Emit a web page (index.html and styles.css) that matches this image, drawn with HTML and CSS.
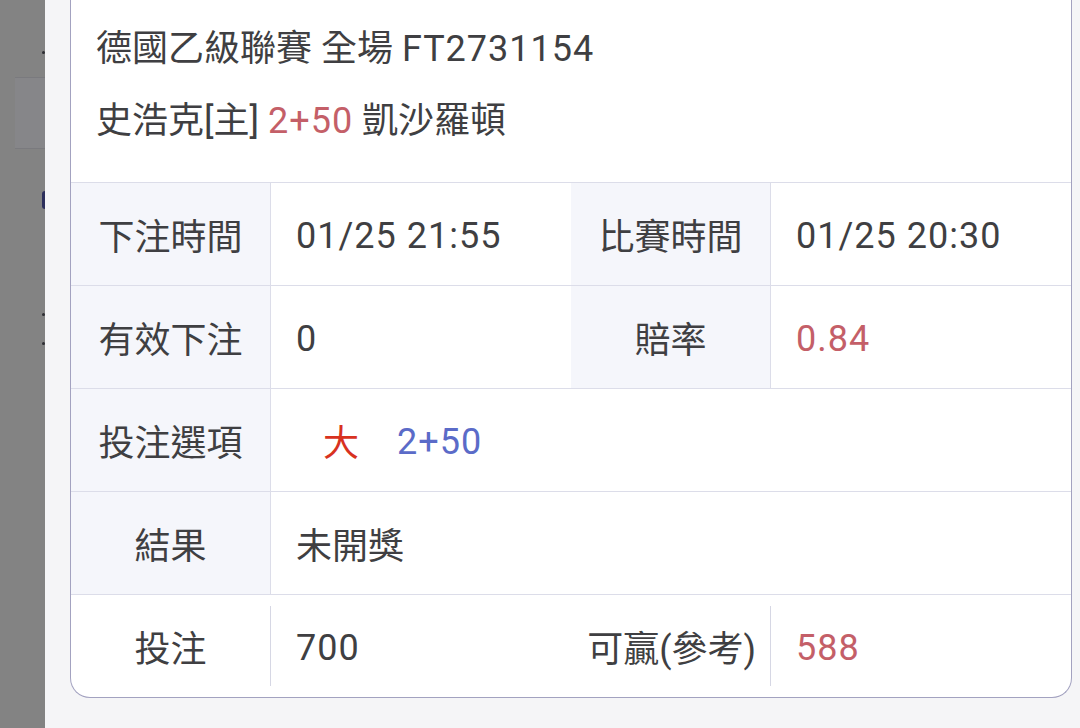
FILE: index.html
```html
<!DOCTYPE html>
<html lang="zh-Hant">
<head>
<meta charset="utf-8">
<title>注單詳情</title>
<link rel="stylesheet" href="styles.css">
</head>
<body>
<div class="page">
  <div class="backdrop">
    <div class="bd-dot bd-dot-top"></div>
    <div class="bd-block"></div>
    <div class="bd-half"></div>
    <div class="bd-dot bd-dot-a"></div>
    <div class="bd-dot bd-dot-b"></div>
  </div>
  <div class="sheet">
    <div class="card">
      <div class="head">
        <div class="head-line">德國乙級聯賽 全場 <span class="num">FT2731154</span></div>
        <div class="head-line">史浩克[主] <span class="num red">2+50</span> 凱沙羅頓</div>
      </div>
      <div class="row">
        <div class="lbl">下注時間</div>
        <div class="val num">01/25 21:55</div>
        <div class="lbl">比賽時間</div>
        <div class="val num">01/25 20:30</div>
      </div>
      <div class="row">
        <div class="lbl">有效下注</div>
        <div class="val num">0</div>
        <div class="lbl">賠率</div>
        <div class="val num red">0.84</div>
      </div>
      <div class="row">
        <div class="lbl">投注選項</div>
        <div class="val span3"><span class="pick">大</span><span class="line num">2+50</span></div>
      </div>
      <div class="row">
        <div class="lbl">結果</div>
        <div class="val span3">未開獎</div>
      </div>
      <div class="row row-last">
        <div class="cell cell-lbl">投注</div>
        <div class="cell cell-val num">700</div>
        <div class="cell cell-right">可贏(參考)</div>
        <div class="cell cell-val num red">588</div>
      </div>
    </div>
  </div>
</div>
</body>
</html>
```

FILE: styles.css
```css
* { box-sizing: border-box; }
html, body { margin: 0; padding: 0; }
body {
  background: #f5f5f7;
  font-family: Roboto, "Noto Sans CJK TC", sans-serif;
  color: #3f3f42;
  width: 1080px;
  height: 728px;
  overflow: hidden;
}
.page {
  display: flex;
  height: 728px;
}
.backdrop {
  width: 45px;
  flex: none;
  background: #838383;
  display: flex;
  flex-direction: column;
  align-items: flex-end;
}
.bd-dot {
  width: 3px;
  height: 3px;
  border-radius: 50%;
  background: #2e2e33;
}
.bd-dot-top { margin-top: 51px; }
.bd-block {
  margin-top: 23px;
  width: 30px;
  height: 72px;
  background: #868689;
  border-top: 1px solid #7a7a7e;
  border-bottom: 1px solid #7a7a7e;
}
.bd-half {
  margin-top: 42px;
  width: 3px;
  height: 18px;
  border-radius: 3px 0 0 3px;
  background: #2c2f5c;
}
.bd-dot-a { margin-top: 104px; }
.bd-dot-b { margin-top: 26px; }

.sheet {
  flex: 1;
  padding-left: 25px;
}
.card {
  width: 1002px;
  background: #fff;
  border: 1px solid #a3a2c0;
  border-top: none;
  border-radius: 0 0 20px 20px;
  overflow: hidden;
}
.head {
  padding: 13px 25px 25px;
}
.head-line {
  font-size: 36px;
  line-height: 72px;
  white-space: nowrap;
}
.num {
  letter-spacing: 1px;
}
.val.num, .cell-val.num {
  padding-top: 3px;
}
.red { color: #c45f68; }

.row {
  display: grid;
  grid-template-columns: 200px 300px 200px 300px;
  height: 103px;
  border-top: 1px solid #dcdde9;
  font-size: 36px;
}
.lbl {
  background: #f5f6fb;
  border-right: 1px solid #dcdde9;
  display: flex;
  align-items: center;
  justify-content: center;
}
.val {
  display: flex;
  align-items: center;
  padding-left: 25px;
}
.span3 { grid-column: 2 / -1; }
.pick {
  color: #d8321f;
  margin-left: 27px;
}
.line {
  color: #5b6bc8;
  margin-left: 38px;
  padding-top: 3px;
}
.row-last {
  padding: 11px 0;
}
.cell {
  display: flex;
  align-items: center;
}
.cell-lbl {
  justify-content: center;
  border-right: 1px solid #d6d7e4;
}
.cell-val {
  padding-left: 25px;
}
.cell-right {
  justify-content: flex-end;
  padding-right: 14px;
  border-right: 1px solid #d6d7e4;
}
```
